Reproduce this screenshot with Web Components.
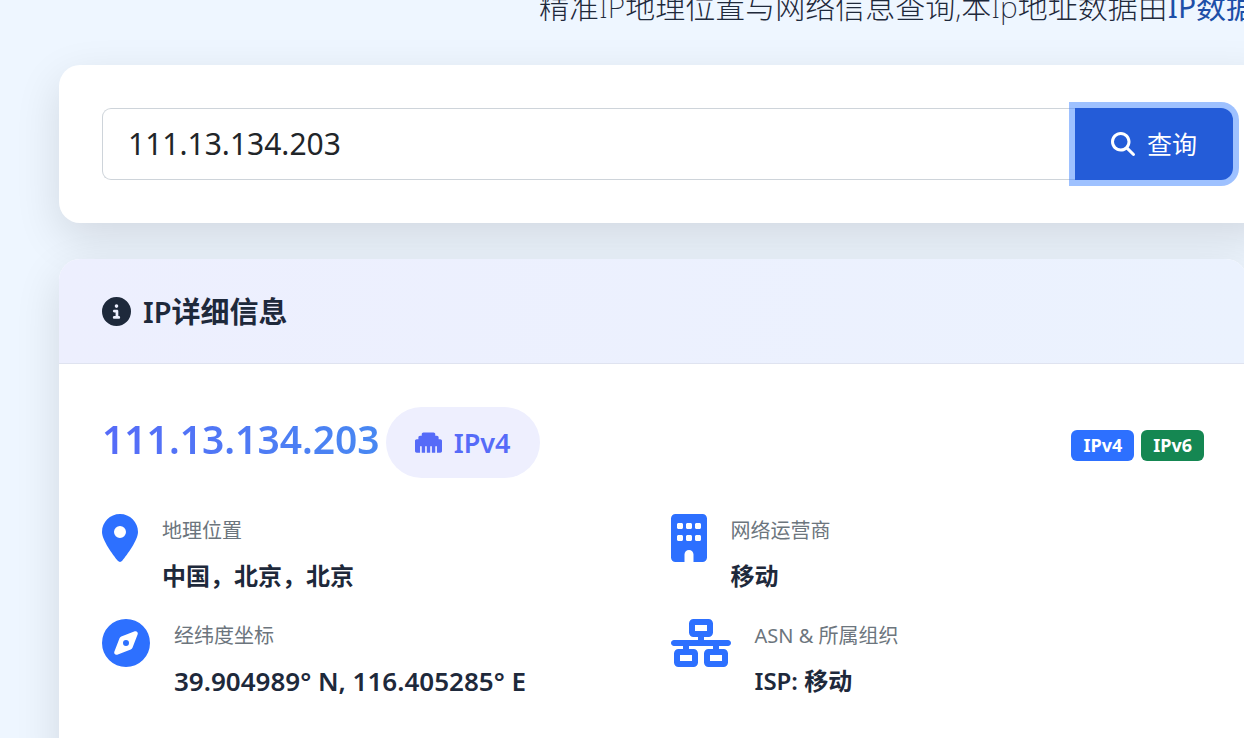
<!DOCTYPE html>
<html lang="zh-CN">
<head>
<meta charset="utf-8">
<title>IP查询</title>
<style>
html{background:#eef6ff}
body{margin:0;color:#1e293b;font-family:"Noto Sans","Noto Sans CJK SC",sans-serif;font-size:24px;line-height:36px}
</style>
</head>
<body>
<ip-page></ip-page>
<script>
const R = (x, y) => `M${x + 16} ${y}h32c8.8 0 16 7.2 16 16v32c0 8.8-7.2 16-16 16h-32c-8.8 0-16-7.2-16-16v-32c0-8.8 7.2-16 16-16z`;
const pin = x => `V336c0-8.8 7.2-16 16-16s16 7.2 16 16V448h${x}`;
const ICONS = {
  search: [512, 'M416 208c0 45.9-14.9 88.3-40 122.7L502.6 457.4c12.5 12.5 12.5 32.8 0 45.3s-32.8 12.5-45.3 0L330.7 376c-34.4 25.2-76.8 40-122.7 40C93.1 416 0 322.9 0 208S93.1 0 208 0S416 93.1 416 208zM208 352a144 144 0 1 0 0-288 144 144 0 1 0 0 288z'],
  info: [512, 'M256 512A256 256 0 1 0 256 0a256 256 0 1 0 0 512zM216 336h24V272H216c-13.3 0-24-10.7-24-24s10.7-24 24-24h48c13.3 0 24 10.7 24 24v88h8c13.3 0 24 10.7 24 24s-10.7 24-24 24H216c-13.3 0-24-10.7-24-24s10.7-24 24-24zm40-208a32 32 0 1 1 0 64 32 32 0 1 1 0-64z'],
  location: [384, 'M215.7 499.2C267 435 384 279.4 384 192C384 86 298 0 192 0S0 86 0 192c0 87.4 117 243 168.3 307.2c12.3 15.3 35.1 15.3 47.4 0zM192 128a64 64 0 1 1 0 128 64 64 0 1 1 0-128z'],
  compass: [512, 'M256 512A256 256 0 1 0 256 0a256 256 0 1 0 0 512zm50.7-186.9L162.4 380.6c-19.4 7.5-38.5-11.6-31-31l55.5-144.3c3.3-8.5 9.9-15.1 18.4-18.4l144.3-55.5c19.4-7.5 38.5 11.6 31 31L325.1 306.7c-3.2 8.5-9.9 15.1-18.4 18.4zM288 256a32 32 0 1 0 -64 0 32 32 0 1 0 64 0z'],
  building: [384, 'M48 0C21.5 0 0 21.5 0 48V464c0 26.5 21.5 48 48 48h96V432c0-26.5 21.5-48 48-48s48 21.5 48 48v80h96c26.5 0 48-21.5 48-48V48c0-26.5-21.5-48-48-48H48z' + R(64, 96) + R(160, 96) + R(256, 96) + R(64, 224) + R(160, 224) + R(256, 224)],
  network: [640, 'M256 64H384v64H256V64zM240 0c-26.5 0-48 21.5-48 48v96c0 26.5 21.5 48 48 48h48v32H32c-17.7 0-32 14.3-32 32s14.3 32 32 32h96v32H80c-26.5 0-48 21.5-48 48v96c0 26.5 21.5 48 48 48H240c26.5 0 48-21.5 48-48V368c0-26.5-21.5-48-48-48H192V288H448v32H400c-26.5 0-48 21.5-48 48v96c0 26.5 21.5 48 48 48H560c26.5 0 48-21.5 48-48V368c0-26.5-21.5-48-48-48H512V288h96c17.7 0 32-14.3 32-32s-14.3-32-32-32H352V192h48c26.5 0 48-21.5 48-48V48c0-26.5-21.5-48-48-48H240zM96 448V384H224v64H96zm320-64H544v64H416V384z'],
  ethernet: [512, 'M0 224V416c0 17.7 14.3 32 32 32H96' + pin(64) + pin(64) + pin(64) + pin(64) + 'c17.7 0 32-14.3 32-32V224c0-17.7-14.3-32-32-32H448V160c0-17.7-14.3-32-32-32H384V96c0-17.7-14.3-32-32-32H160c-17.7 0-32 14.3-32 32v32H96c-17.7 0-32 14.3-32 32v32H32c-17.7 0-32 14.3-32 32z']
};
const define = (name, html) => customElements.define(name, class extends HTMLElement {
  constructor() {
    super();
    const t = document.createElement('template');
    t.innerHTML = html;
    this.attachShadow({ mode: 'open' }).append(t.content.cloneNode(true));
  }
});

customElements.define('ip-icon', class extends HTMLElement {
  connectedCallback() {
    if (this.shadowRoot) return;
    const [w, d] = ICONS[this.getAttribute('name')];
    this.attachShadow({ mode: 'open' }).innerHTML = `
      <style>:host{display:block;flex:none}svg{display:block;height:var(--icon-size,24px);fill:currentColor}</style>
      <svg viewBox="0 0 ${w} 512" aria-hidden="true"><path fill-rule="evenodd" d="${d}"/></svg>`;
  }
});

define('ip-hero', `
<style>
:host{display:block;overflow:hidden;height:29px}
p{margin:-15px 0 0;padding-left:539px;white-space:nowrap;font-size:30px;line-height:43px;font-weight:200}
a{color:#1d4fa8;font-weight:400;text-decoration:none}
</style>
<p>精准IP地理位置与网络信息查询,本Ip地址数据由<a href="#">IP数据云</a></p>`);

define('ip-search', `
<style>
:host{display:block;background:#fff;border-radius:21px;padding:43px;box-shadow:0 15px 45px rgba(0,0,0,.12)}
form{display:flex;margin:0}
input{flex:1;min-width:0;box-sizing:border-box;height:72px;padding:0 25px 2px;border:1px solid #ced4da;border-right:0;border-radius:9px 0 0 9px;background:#fff;color:#212529;font:inherit;font-size:30px;outline:0}
button{display:flex;align-items:center;gap:12px;height:72px;padding:0 36px;border:0;border-radius:0 12px 12px 0;background:#245cd8;color:#fff;font:inherit;font-size:25px;box-shadow:0 0 0 6px rgba(61,132,255,.5);--icon-size:24px}
</style>
<form onsubmit="return false"><input aria-label="IP地址" value="111.13.134.203"><button type="submit"><ip-icon name="search"></ip-icon><span>查询</span></button></form>`);

define('ip-card', `
<style>
:host{display:block;background:#fff;border-radius:21px;box-shadow:0 15px 45px rgba(0,0,0,.12)}
header{display:flex;align-items:center;gap:12px;height:104px;padding:0 43px;border-bottom:1px solid #dfe3f0;border-radius:21px 21px 0 0;background:linear-gradient(90deg,#edeffe,#ebf2fe);--icon-size:29px}
h2{margin:0;padding-top:2px;font-size:29px;line-height:36px;font-weight:600}
.body{padding:43px 43px 72px}
</style>
<header><ip-icon name="info"></ip-icon><h2><slot name="title"></slot></h2></header>
<div class="body"><slot></slot></div>`);

define('ip-summary', `
<style>
:host{display:flex;align-items:center;margin-bottom:36px}
.ip{font-size:39px;line-height:48px;font-weight:600;padding-bottom:8px;background:linear-gradient(90deg,#566bf8,#4888f2);-webkit-background-clip:text;background-clip:text;color:transparent}
.type{display:flex;align-items:center;gap:12px;height:71px;margin:0 auto 0 6px;padding:0 29px;border-radius:36px;background:#eeeffe;color:#566bf8;font-size:27px;font-weight:600;--icon-size:27px}
.tags{display:flex;gap:7px;padding-top:6px}
.tags span{padding:0 12px;border-radius:6px;background:#2d70ff;color:#fff;font-size:18px;line-height:31px;font-weight:700}
.tags .v6{background:#158752}
</style>
<span class="ip">111.13.134.203</span>
<span class="type"><ip-icon name="ethernet"></ip-icon><span>IPv4</span></span>
<div class="tags"><span>IPv4</span><span class="v6">IPv6</span></div>`);

define('ip-grid', `
<style>:host{display:grid;grid-template-columns:1fr 1fr;gap:24px 35px}</style><slot></slot>`);

customElements.define('ip-field', class extends HTMLElement {
  connectedCallback() {
    if (this.shadowRoot) return;
    this.attachShadow({ mode: 'open' }).innerHTML = `
<style>
:host{display:flex;gap:24px;--icon-size:48px}
ip-icon{color:#2d70ff}
dl{margin:0}
dt{color:#6c757d;font-size:20px;line-height:34px;font-weight:400}
dd{margin:10px 0 0;padding-bottom:1px;font-size:24px;line-height:36px;font-weight:600}
:host([numeric]) dd{font-size:26px}
</style>
<ip-icon name="${this.getAttribute('icon')}"></ip-icon>
<dl><dt>${this.getAttribute('label')}</dt><dd><slot></slot></dd></dl>`;
  }
});

define('ip-page', `
<style>
:host{display:block;box-sizing:border-box;min-height:100vh;padding-bottom:36px;overflow:hidden;background:#eef6ff}
main{display:grid;gap:36px;margin-left:59px}
ip-search{margin-right:-32px}
ip-card{margin-right:-3px}
ip-hero{margin-bottom:36px}
</style>
<ip-hero></ip-hero>
<main>
<ip-search></ip-search>
<ip-card><span slot="title">IP详细信息</span>
<ip-summary></ip-summary>
<ip-grid>
<ip-field icon="location" label="地理位置">中国，北京，北京</ip-field>
<ip-field icon="building" label="网络运营商">移动</ip-field>
<ip-field numeric icon="compass" label="经纬度坐标">39.904989° N, 116.405285° E</ip-field>
<ip-field icon="network" label="ASN &amp;amp; 所属组织">ISP: 移动</ip-field>
</ip-grid></ip-card>
</main>`);
</script>
</body>
</html>
